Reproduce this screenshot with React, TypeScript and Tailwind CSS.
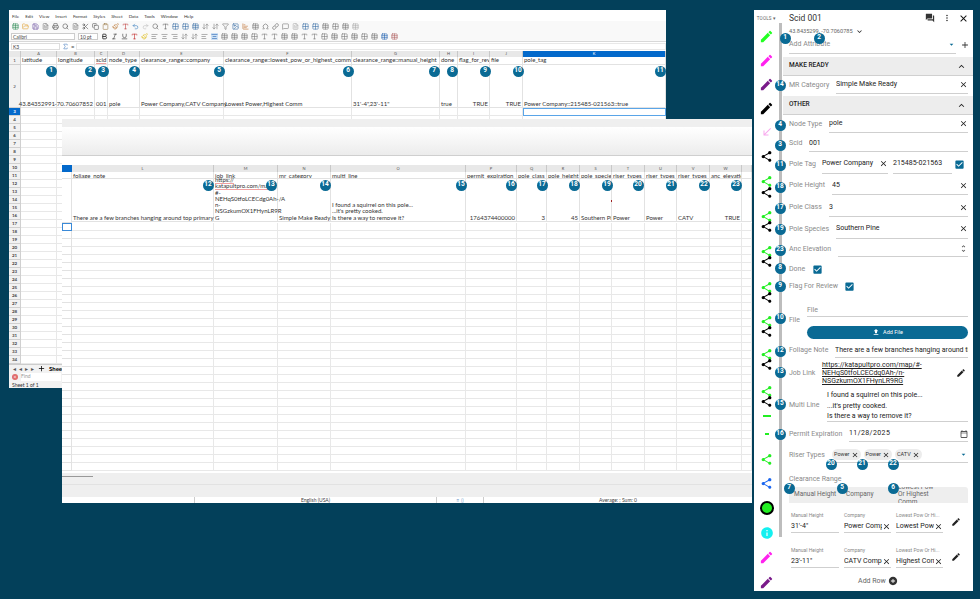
import {
  MdAdd, MdAddCircle, MdArrowDropDown, MdCallReceived, MdCheckBox, MdClose, MdEdit, MdExpandLess, MdExpandMore,
  MdFileUpload, MdForum, MdInfo, MdMoreVert, MdOutlineCalendarToday, MdShare, MdUnfoldMore,
} from "react-icons/md"
import {
  AlignCenter, AlignLeft, AlignRight, ArrowDownUp, Bold, ChartBar, Clipboard, Copy, Filter, FolderOpen, Grid2x2, Image, Italic,
  Link, MessageSquare, Omega, Printer, Redo2, Save, Scissors, Search, Sigma, Table, Type, Underline, Undo2, FileText, Paintbrush,
} from "lucide-react"

const W1_COLS = ["A", "B", "C", "D", "E", "F", "G", "H", "I", "J", "K"]
const W2_COLS = ["L", "M", "N", "O", "P", "Q", "R", "S", "T", "U", "V", "W", ""]
const SPELL = ["scid", "https://", "katapultpro.com/map/"]

const W1_HEAD = ["latitude", "longitude", "scid", "node_type", "clearance_range::company", "clearance_range::lowest_pow_or_highest_comm", "clearance_range::manual_height", "done", "flag_for_review", "file", "pole_tag"]
const W1_DATA: [string, boolean][] = [
  ["43.84352991", true], ["-70.70607852", true], ["001", false], ["pole", false], ["Power Company,CATV Company", false],
  ["Lowest Power,Highest Comm", false], ["31'-4\",23'-11\"", false], ["true", false], ["TRUE", true], ["TRUE", true],
  ["Power Company::215485-021563::true", false],
]

const W2_HEAD = ["foliage_note", "job_link", "mr_category", "multi_line", "permit_expiration", "pole_class", "pole_height", "pole_species", "riser_types", "riser_types", "riser_types", "anc_elevation", ""]
const W2_DATA: [string, boolean][] = [
  ["There are a few branches hanging around top primary", false],
  ["https://\nkatapultpro.com/map/\n#-\nNEHqS0tfoLCECdg0Ah-/A\nn-\nNSGzkumOX1FHynLR9R\nG", false],
  ["Simple Make Ready", false],
  ["I found a squirrel on this pole...\n...it's pretty cooked.\nIs there a way to remove it?", false],
  ["1764374400000", true], ["3", true], ["45", true], ["Southern Pine", false], ["Power", false], ["Power", false], ["CATV", false], ["TRUE", true], ["", false],
]

const PAGE_BADGES = [
  { n: 1, x: 51, y: 71 }, { n: 2, x: 90, y: 71 }, { n: 3, x: 103, y: 71 }, { n: 4, x: 134, y: 71 }, { n: 5, x: 219, y: 71 },
  { n: 6, x: 348, y: 71 }, { n: 7, x: 434, y: 71 }, { n: 8, x: 452, y: 71 }, { n: 9, x: 485, y: 71 }, { n: 10, x: 518, y: 71 }, { n: 11, x: 660, y: 71 },
  { n: 12, x: 208, y: 185 }, { n: 13, x: 271, y: 185 }, { n: 14, x: 325, y: 185 }, { n: 15, x: 461, y: 185 }, { n: 16, x: 511, y: 185 },
  { n: 17, x: 542, y: 185 }, { n: 18, x: 574, y: 185 }, { n: 19, x: 607, y: 185 }, { n: 20, x: 638, y: 185 }, { n: 21, x: 671, y: 185 },
  { n: 22, x: 704, y: 185 }, { n: 23, x: 736, y: 185 },
  { n: 1, x: 785, y: 38 }, { n: 2, x: 819, y: 38 }, { n: 14, x: 780, y: 85 }, { n: 4, x: 780, y: 125 }, { n: 3, x: 780, y: 145 },
  { n: 11, x: 780, y: 165 }, { n: 18, x: 780, y: 187 }, { n: 17, x: 780, y: 208 }, { n: 19, x: 780, y: 229 }, { n: 23, x: 780, y: 250 },
  { n: 8, x: 780, y: 268 }, { n: 9, x: 780, y: 286 }, { n: 10, x: 780, y: 318 }, { n: 12, x: 780, y: 351 }, { n: 13, x: 780, y: 372 },
  { n: 15, x: 780, y: 404 }, { n: 16, x: 780, y: 434 }, { n: 20, x: 831, y: 464 }, { n: 21, x: 862, y: 464 }, { n: 22, x: 893, y: 464 },
  { n: 7, x: 789, y: 488 }, { n: 5, x: 842, y: 488 }, { n: 6, x: 893, y: 488 },
]

// left rail: height of each slot decides where the next icon lands
const RAIL = [
  { kind: "pencil", color: "text-[#22ff22]", h: "h-[24px]" },
  { kind: "pencil", color: "text-[#ff22ee]", h: "h-[24px]" },
  { kind: "pencil", color: "text-[#7a1a8a]", h: "h-[24px]" },
  { kind: "pencil", color: "text-black", h: "h-[25px]" },
  { kind: "arrow", color: "text-[#f8a8ee]", h: "h-[24px]" },
  { kind: "share", color: "text-black", h: "h-[25px]" },
  { kind: "share", color: "text-[#22ee22]", h: "h-[11px]" },
  { kind: "share", color: "text-black", h: "h-[24px]" },
  { kind: "share", color: "text-[#22ee22]", h: "h-[10px]" },
  { kind: "share", color: "text-black", h: "h-[25px]" },
  { kind: "share", color: "text-[#22ee22]", h: "h-[10px]" },
  { kind: "share", color: "text-black", h: "h-[26px]" },
  { kind: "share", color: "text-[#22ee22]", h: "h-[10px]" },
  { kind: "share", color: "text-black", h: "h-[24px]" },
  { kind: "share", color: "text-[#22ee22]", h: "h-[10px]" },
  { kind: "share", color: "text-black", h: "h-[24px]" },
  { kind: "share", color: "text-[#22ee22]", h: "h-[10px]" },
  { kind: "share", color: "text-black", h: "h-[27px]" },
  { kind: "share", color: "text-[#22ee22]", h: "h-[10px]" },
  { kind: "share", color: "text-black", h: "h-[20px]" },
  { kind: "dash", color: "text-[#22ee22]", h: "h-[18px]" },
  { kind: "dot", color: "text-[#22ee22]", h: "h-[20px]" },
  { kind: "share", color: "text-[#22ee22]", h: "h-[24px]" },
  { kind: "share", color: "text-[#1a66f0]", h: "h-[24px]" },
  { kind: "circle", color: "text-[#22ee22]", h: "h-[25px]" },
  { kind: "info", color: "text-[#14f0f0]", h: "h-[24px]" },
  { kind: "pencil", color: "text-[#ff22ee]", h: "h-[25px]" },
  { kind: "pencil", color: "text-[#7a1a8a]", h: "h-[16px]" },
]

const TOOLBAR_ONE = [
  { I: Table, c: "text-[#2e8b57]" }, { I: FolderOpen, c: "text-[#e0a030]" }, { I: Save, c: "text-[#6a4fa0]" }, { I: FileText, c: "text-[#777]" },
  { I: Printer, c: "text-[#555]" }, { I: Search, c: "text-[#555]" }, { I: FileText, c: "text-[#777]" }, { I: Scissors, c: "text-[#555]" },
  { I: Copy, c: "text-[#555]" }, { I: Clipboard, c: "text-[#a08050]" }, { I: Paintbrush, c: "text-[#c08040]" }, { I: Type, c: "text-[#c04040]" },
  { I: Undo2, c: "text-[#3a7fc0]" }, { I: Redo2, c: "text-[#bbb]" }, { I: Search, c: "text-[#666]" }, { I: Type, c: "text-[#666]" },
  { I: Grid2x2, c: "text-[#3a6ea5]" }, { I: Grid2x2, c: "text-[#3a6ea5]" }, { I: Table, c: "text-[#3a6ea5]" }, { I: ArrowDownUp, c: "text-[#777]" },
  { I: ArrowDownUp, c: "text-[#777]" }, { I: Filter, c: "text-[#777]" }, { I: Image, c: "text-[#3a6ea5]" }, { I: ChartBar, c: "text-[#c07030]" },
  { I: Table, c: "text-[#777]" }, { I: Omega, c: "text-[#666]" }, { I: Link, c: "text-[#666]" }, { I: MessageSquare, c: "text-[#777]" },
  { I: FileText, c: "text-[#aaa]" }, { I: Grid2x2, c: "text-[#3a6ea5]" }, { I: Grid2x2, c: "text-[#3a6ea5]" }, { I: Table, c: "text-[#777]" },
  { I: Grid2x2, c: "text-[#777]" }, { I: Table, c: "text-[#777]" }, { I: Table, c: "text-[#aaa]" },
]

const TOOLBAR_TWO = [
  AlignLeft, AlignCenter, AlignRight, ArrowDownUp, ArrowDownUp, AlignLeft, AlignCenter, Table, Table, Table, Grid2x2, Type, Type, Table, Table, Type, Type,
  Grid2x2, Table, Grid2x2, Table, Grid2x2, Table,
]

function Badge({ n, x, y }: { n: number; x: number; y: number }) {
  return (
    <span
      className="absolute z-30 w-[11px] h-[11px] -ml-[5.5px] -mt-[5.5px] rounded-full bg-[#0a6a94] text-white text-[6.5px] font-bold flex items-center justify-center font-['Roboto',sans-serif]"
      style={{ left: x, top: y }}
    >
      {n}
    </span>
  )
}

function Menu() {
  return (
    <div className="h-[11px] pt-[2px] flex items-center gap-[6px] pl-[3px] text-[4.6px] text-[#333]">
      {["File", "Edit", "View", "Insert", "Format", "Styles", "Sheet", "Data", "Tools", "Window", "Help"].map((m) => (
        <span key={m}>{m}</span>
      ))}
    </div>
  )
}

function Cell({ text, right, tall, line }: { text: string; right?: boolean; tall?: boolean; line?: boolean }) {
  return (
    <div
      className={`border-r border-b border-[#e2e2e2] px-px min-w-0 whitespace-nowrap text-[6px] leading-[6.3px] text-[#333] flex flex-col ${
        tall ? "h-[43px] justify-end" : "h-[8px] overflow-hidden justify-center"
      } ${right ? "items-end" : "items-start"} ${line ? "overflow-hidden" : ""}`}
    >
      {text.split("\n").map((t, i) => (
        <span key={i} className={SPELL.includes(t) ? "underline decoration-[#f0a0a0]" : ""}>
          {t}
        </span>
      ))}
    </div>
  )
}

function HeadCell({ label, active }: { label: string; active?: boolean }) {
  return (
    <div
      className={`h-[6px] border-r border-[#c8c8c8] text-[4px] leading-[6px] text-center ${
        active ? "bg-[#0369cb] text-white" : "bg-[#e8e8e8] text-[#555]"
      }`}
    >
      {label}
    </div>
  )
}

function SheetOne() {
  const rows = Array.from({ length: 32 }, (_, i) => i + 3)
  return (
    <div className="grid grid-cols-[12px_36px_38px_13px_32px_84px_128px_88px_18px_32px_33px_143px] content-start">
      <HeadCell label="" />
      {W1_COLS.map((c) => (
        <HeadCell key={c} label={c} active={c === "K"} />
      ))}
      <div className="h-[8px] bg-[#f2f2f2] border-r border-b border-[#d0d0d0] text-[4.5px] leading-[8px] text-center text-[#444]">1</div>
      {W1_HEAD.map((t) => (
        <Cell key={t} text={t} line />
      ))}
      <div className="h-[43px] bg-[#f2f2f2] border-r border-b border-[#d0d0d0] text-[4.5px] leading-[43px] text-center text-[#444]">2</div>
      {W1_DATA.map(([t, r]) => (
        <Cell key={t} text={t} right={r} tall />
      ))}
      {rows.map((r) => (
        <div key={r} className="contents">
          <div
            className={`h-[8px] border-r border-b border-[#d0d0d0] text-[4.5px] leading-[8px] text-center font-bold ${
              r === 3 ? "bg-[#0369cb] text-white" : "bg-[#f2f2f2] text-[#444]"
            }`}
          >
            {r}
          </div>
          {W1_COLS.map((c) => (
            <div
              key={c}
              className={`h-[8px] border-r border-b ${r === 3 && c === "K" ? "border-[#5aa5e8] border-l border-t" : "border-[#e8e8e8]"}`}
            />
          ))}
        </div>
      ))}
    </div>
  )
}

function SheetTwo() {
  const rows = Array.from({ length: 31 }, (_, i) => i + 3)
  return (
    <div className="grid grid-cols-[10px_142px_64px_53px_135px_51px_30px_33px_32px_33px_32px_33px_32px_10px] content-start">
      <div className="h-[7px] bg-[#0369cb]" />
      {W2_COLS.map((c, i) => (
        <div key={i} className="h-[7px] bg-[#e8e8e8] border-r border-[#c8c8c8] text-[4px] leading-[7px] text-center text-[#555]">
          {c}
        </div>
      ))}
      <div className="h-[7px] border-r border-b border-[#e2e2e2]" />
      {W2_HEAD.map((t, i) => (
        <div key={i} className="h-[7px] border-r border-b border-[#e2e2e2] px-px overflow-hidden whitespace-nowrap text-[6px] leading-[7px] text-[#333]">
          {t}
        </div>
      ))}
      <div className="h-[44px] border-r border-b border-[#e2e2e2]" />
      {W2_DATA.map(([t, r], i) => (
        <Cell key={i} text={t} right={r} tall line={i === 7} />
      ))}
      {rows.map((r) => (
        <div key={r} className="contents">
          <div className={`h-[8px] border-r border-b ${r === 3 ? "border-[#3a8ad8] border-l border-t" : "border-[#e2e2e2]"}`} />
          {W2_COLS.map((c, i) => (
            <div key={i} className="h-[8px] border-r border-b border-[#e8e8e8]" />
          ))}
        </div>
      ))}
    </div>
  )
}

function WindowOne() {
  return (
    <div className="absolute left-[9px] top-[10px] w-[657px] h-[378px] bg-white flex flex-col overflow-hidden font-['Lato',sans-serif]">
      <Menu />
      <div className="h-[11px] bg-[#f9f9f9] flex items-center gap-[3px] pl-[3px]">
        {TOOLBAR_ONE.map(({ I, c }, i) => (
          <I key={i} size={7} className={`${c} shrink-0`} strokeWidth={2} />
        ))}
      </div>
      <div className="h-[10px] bg-[#f9f9f9] flex items-center gap-[3px] pl-[2px] border-b border-[#d8d8d8]">
        <div className="w-[64px] h-[7px] bg-white border border-[#ccc] text-[5px] leading-[6px] pl-px text-[#444] shrink-0">Calibri</div>
        <div className="w-[20px] h-[7px] bg-white border border-[#ccc] text-[5px] leading-[6px] pl-px text-[#444] shrink-0">10 pt</div>
        <Bold size={7} className="text-[#333] shrink-0" strokeWidth={3} />
        <Italic size={7} className="text-[#333] shrink-0" />
        <Underline size={7} className="text-[#333] shrink-0" />
        <Type size={7} className="text-[#c02020] shrink-0" />
        <Paintbrush size={7} className="text-[#e0c020] shrink-0" />
        {TOOLBAR_TWO.map((I, i) => (
          <I key={i} size={7} className={`shrink-0 ${i === 6 ? "text-[#2060b0] bg-[#cfe2f5]" : "text-[#777]"}`} />
        ))}
        <Table size={7} className="text-[#2060b0] shrink-0" />
        <Table size={7} className="text-[#b06060] shrink-0" />
      </div>
      <div className="h-[9px] flex items-center gap-[2px] pl-[2px] text-[5px] text-[#444]">
        <div className="w-[49px] h-[7px] bg-white border border-[#ddd] leading-[6px] pl-px shrink-0">K3</div>
        <Sigma size={7} className="text-[#4a80c0] shrink-0" />
        <span className="text-[6px]">=</span>
        <div className="flex-1 h-[7px] bg-white border border-[#e8e8e8]" />
      </div>
      <div className="flex-1 min-h-0 overflow-hidden">
        <SheetOne />
      </div>
      <div className="h-[8px] bg-[#f2f2f2] flex items-center gap-[3px] pl-[4px] text-[6px] text-[#555] border-t border-[#ccc]">
        <span>◂</span><span>◂</span><span>▸</span><span>▸</span>
        <MdAdd size={9} className="text-black" />
        <span className="font-bold text-black underline">Sheet</span>
      </div>
      <div className="h-[10px] bg-[#f2f2f2] flex items-center gap-[3px] pl-[3px] text-[5px] text-[#999]">
        <span className="w-[6px] h-[6px] rounded-full bg-[#e06a6a] text-white text-[5px] leading-[6px] text-center">×</span>
        <span className="w-[40px] bg-white">Find</span>
      </div>
      <div className="h-[6px] bg-[#f2f2f2] pl-[3px] text-[5px] leading-[6px] text-[#333]">Sheet 1 of 1</div>
    </div>
  )
}

function WindowTwo() {
  return (
    <div className="absolute z-10 left-[62px] top-[119px] w-[690px] h-[384px] bg-white flex flex-col overflow-hidden font-['Lato',sans-serif]">
      <div className="h-[8px] bg-[#efefef]" />
      <div className="h-[29px] bg-linear-to-b from-white to-[#ececec] border-b border-[#cfcfcf]" />
      <div className="h-[9px] bg-white" />
      <div className="h-[308px] overflow-hidden">
        <SheetTwo />
      </div>
      <div className="relative h-[24px] bg-[#efefef]">
        <div className="absolute left-0 top-[3px] w-[31px] h-px bg-[#999]" />
        <div className="absolute left-0 right-0 top-[11px] h-px bg-[#e2e2e2]" />
      </div>
      <div className="flex-1 flex items-center text-[5px] text-[#444]">
        <div className="w-[133px] h-full border-r border-[#ccc]" />
        <div className="w-[242px] h-full border-r border-[#ccc] text-center leading-[6px]">English (USA)</div>
        <div className="w-[47px] h-full border-r border-[#ccc] text-center leading-[6px] text-[#4a80c0]">≡ ▯</div>
        <div className="flex-1 text-center leading-[6px]">Average: ; Sum: 0</div>
      </div>
      <span className="absolute left-[549px] top-[81px] w-px h-[2px] bg-[#a02020]" />
    </div>
  )
}

function RailIcon({ kind, color }: { kind: string; color: string }) {
  if (kind === "pencil") return <MdEdit size={15} className={color} />
  if (kind === "share") return <MdShare size={13} className={color} />
  if (kind === "arrow") return <MdCallReceived size={12} className={color} />
  if (kind === "info") return <MdInfo size={14} className={color} />
  if (kind === "circle") return <span className="w-[14px] h-[14px] rounded-full bg-[#22ee22] border-2 border-black" />
  if (kind === "dash") return <span className="w-[8px] h-[2px] bg-[#22ee22]" />
  return <span className="w-[4px] h-[2px] bg-[#22ee22]" />
}

function Rail() {
  return (
    <div className="w-[25px] shrink-0 flex flex-col items-center">
      <div className="h-[19px] w-full flex items-center justify-center text-[4.5px] text-[#666] tracking-[0.2px]">TOOLS ▾</div>
      {RAIL.map((r, i) => (
        <div key={i} className={`${r.h} flex items-start justify-center overflow-visible`}>
          <RailIcon kind={r.kind} color={r.color} />
        </div>
      ))}
    </div>
  )
}

function XBtn({ size = 9 }: { size?: number }) {
  return <MdClose size={size} className="text-[#222] shrink-0" />
}

function Field({ label, value, height, labelW, close = true }: { label: string; value: string; height: string; labelW: string; close?: boolean }) {
  return (
    <div className={`${height} flex items-center pl-[6px] pr-[5px]`}>
      <span className={`${labelW} shrink-0 text-[7px] text-[#8a8a8a] whitespace-nowrap`}>{label}</span>
      <div className="flex-1 min-w-0 self-stretch flex items-center border-b border-[#cfcfcf] text-[7px] text-[#222]">
        <span className="flex-1 whitespace-nowrap overflow-hidden">{value}</span>
        {close && <XBtn />}
      </div>
    </div>
  )
}

function Band({ label, top }: { label: string; top: string }) {
  return (
    <div className={`${top} h-[19px] bg-[#ededed] border-b border-[#d0d0d0] flex items-center justify-between pl-[6px] pr-[6px]`}>
      <span className="text-[6.5px] font-medium text-[#222]">{label}</span>
      <MdExpandLess size={11} className="text-[#222]" />
    </div>
  )
}

function Chip({ label }: { label: string }) {
  return (
    <span className="h-[11px] px-[2px] rounded-full bg-[#ececec] flex items-center gap-[1px] text-[5.5px] text-[#333]">
      {label}
      <MdClose size={8} className="text-[#222]" />
    </span>
  )
}

function ClearanceRow({ height, company, lowest, top }: { height: string; company: string; lowest: string; top: string }) {
  const cols = [
    { label: "Manual Height", value: height, w: "w-[48px]", x: false },
    { label: "Company", value: company, w: "w-[47px]", x: true },
    { label: "Lowest Pow Or Hi...", value: lowest, w: "w-[47px]", x: true },
  ]
  return (
    <div className={`${top} flex items-end gap-[5px] pl-[8px]`}>
      {cols.map((c) => (
        <div key={c.label} className={`${c.w} h-[22px] border-b border-[#cfcfcf] flex flex-col justify-between pb-[1px]`}>
          <span className="text-[5px] text-[#888] whitespace-nowrap leading-[8px]">{c.label}</span>
          <span className="flex items-center text-[7px] text-[#222] leading-[10px]">
            <span className="flex-1 overflow-hidden whitespace-nowrap">{c.value}</span>
            {c.x && <XBtn />}
          </span>
        </div>
      ))}
      <div className="self-center ml-[3px]">
        <MdEdit size={10} className="text-[#222]" />
      </div>
    </div>
  )
}

function Panel() {
  return (
    <div className="absolute left-[754px] top-[10px] w-[219px] h-[581px] bg-white flex overflow-hidden font-['Roboto',sans-serif]">
      <Rail />
      <div className="w-[3px] shrink-0 mt-[13px] h-[514px] bg-[#bdbdbd]" />
      <div className="w-[1px] shrink-0" />
      <div className="flex-1 min-w-0 flex flex-col">
        <div className="h-[16px] flex items-center pl-[6px] pr-[4px] text-[8.5px] text-[#333]">
          <span className="flex-1">Scid 001</span>
          <MdForum size={10} className="text-[#333] mr-[7px]" />
          <MdMoreVert size={10} className="text-[#333] mr-[6px]" />
          <MdClose size={11} className="text-[#111]" />
        </div>
        <div className="h-[10px] flex items-center pl-[6px] text-[5.6px] text-[#666]">
          43.8435299, -70.7060785
          <MdExpandMore size={9} className="ml-[2px] text-[#222]" />
        </div>
        <div className="h-[18px] flex items-center pl-[6px] pr-[3px] gap-[4px]">
          <div className="flex-1 self-stretch flex items-center justify-between border-b border-[#cfcfcf] text-[7px] text-[#8a8a8a]">
            Add Attribute
            <MdArrowDropDown size={9} className="text-[#0a6a94]" />
          </div>
          <MdAdd size={10} className="text-[#333]" />
        </div>
        <Band label="MAKE READY" top="mt-[3px]" />
        <Field label="MR Category" value="Simple Make Ready" height="h-[18px]" labelW="w-[47px]" />
        <Band label="OTHER" top="mt-[2px]" />
        <Field label="Node Type" value="pole" height="h-[18px]" labelW="w-[40px]" />
        <Field label="Scid" value="001" height="h-[17px] mt-[2px]" labelW="w-[20px]" close={false} />
        <div className="h-[20px] mt-[2px] flex items-center pl-[6px] pr-[8px]">
          <span className="w-[33px] shrink-0 text-[7px] text-[#8a8a8a] whitespace-nowrap">Pole Tag</span>
          <div className="w-[66px] self-stretch border-b border-[#cfcfcf] flex items-center text-[7px] text-[#222]">
            <span className="flex-1 whitespace-nowrap">Power Company</span>
            <XBtn />
          </div>
          <div className="w-[59px] ml-[5px] self-stretch border-b border-[#cfcfcf] flex items-center text-[7px] text-[#222]">215485-021563</div>
          <MdCheckBox size={11} className="ml-[2px] text-[#0a6a94]" />
        </div>
        <Field label="Pole Height" value="45" height="h-[19px] mt-[2px]" labelW="w-[43px]" />
        <Field label="Pole Class" value="3" height="h-[19px] mt-[3px]" labelW="w-[40px]" />
        <Field label="Pole Species" value="Southern Pine" height="h-[20px] mt-[2px]" labelW="w-[47px]" />
        <div className="h-[16px] mt-[2px] flex items-center pl-[6px] pr-[5px]">
          <span className="w-[49px] shrink-0 text-[7px] text-[#8a8a8a] whitespace-nowrap">Anc Elevation</span>
          <div className="flex-1 self-stretch border-b border-[#cfcfcf] flex items-center justify-end">
            <MdUnfoldMore size={9} className="text-[#555]" />
          </div>
        </div>
        <div className="h-[16px] mt-[4px] flex items-center pl-[6px] text-[7px] text-[#8a8a8a]">
          <span className="w-[23px]">Done</span>
          <MdCheckBox size={11} className="text-[#0a6a94]" />
        </div>
        <div className="h-[16px] mt-px flex items-center pl-[6px] text-[7px] text-[#8a8a8a]">
          <span className="w-[55px] whitespace-nowrap">Flag For Review</span>
          <MdCheckBox size={11} className="text-[#0a6a94]" />
        </div>
        <div className="h-[37px] mt-[8px] flex items-center pl-[6px] pr-[5px]">
          <span className="w-[18px] shrink-0 text-[7px] text-[#8a8a8a] -mt-px">File</span>
          <div className="flex-1 flex flex-col">
            <div className="h-[14px] border-b border-[#cfcfcf] text-[7px] text-[#8a8a8a] leading-[14px]">File</div>
            <div className="mt-[9px] h-[13px] rounded-full bg-[#0a6a94] flex items-center justify-center gap-[3px] text-[5.5px] text-white">
              <MdFileUpload size={8} />
              Add File
            </div>
          </div>
        </div>
        <Field label="Foliage Note" value="There are a few branches hanging around the top primary" height="h-[15px] mt-[4px]" labelW="w-[46px]" close={false} />
        <div className="h-[24px] mt-[3px] flex items-center pl-[6px] pr-[7px]">
          <span className="w-[33px] shrink-0 text-[7px] text-[#8a8a8a]">Job Link</span>
          <div className="flex-1 text-[7px] leading-[8px] text-[#222] underline">
            https://katapultpro.com/map/#-
            <br />
            NEHqS0tfoLCECdg0Ah-/n-
            <br />
            NSGzkumOX1FHynLR9RG
          </div>
          <MdEdit size={10} className="text-[#222]" />
        </div>
        <div className="h-[33px] mt-[4px] flex items-center pl-[6px] pr-[5px]">
          <span className="w-[38px] shrink-0 text-[7px] text-[#8a8a8a]">Multi Line</span>
          <div className="flex-1 self-stretch border-b border-[#cfcfcf] text-[7px] leading-[10.5px] text-[#222] pt-px">
            I found a squirrel on this pole...
            <br />
            ...it's pretty cooked.
            <br />
            Is there a way to remove it?
          </div>
        </div>
        <div className="h-[16px] mt-[4px] flex items-center pl-[6px] pr-[5px]">
          <span className="w-[60px] shrink-0 text-[7px] text-[#8a8a8a] whitespace-nowrap">Permit Expiration</span>
          <div className="flex-1 self-stretch border-b border-[#cfcfcf] flex items-center justify-between text-[7px] text-[#222] tracking-[0.4px]">
            11/28/2025
            <MdOutlineCalendarToday size={8} className="text-[#222]" />
          </div>
        </div>
        <div className="h-[16px] mt-[5px] flex items-center pl-[6px] pr-[5px]">
          <span className="w-[43px] shrink-0 text-[7px] text-[#8a8a8a] whitespace-nowrap">Riser Types</span>
          <div className="flex-1 self-stretch border-b border-[#cfcfcf] flex items-center gap-[3px]">
            <Chip label="Power" />
            <Chip label="Power" />
            <Chip label="CATV" />
            <MdArrowDropDown size={9} className="ml-auto text-[#0a6a94]" />
          </div>
        </div>
        <div className="h-[16px] mt-[8px] flex items-center pl-[6px] text-[7px] text-[#8a8a8a]">Clearance Range</div>
        <div className="h-[16px] ml-[6px] mr-[5px] bg-[#eeeeee] rounded-t-[3px] flex text-[6.5px] text-[#666] overflow-hidden">
          <div className="w-[52px] pl-[5px] self-center whitespace-nowrap">Manual Height</div>
          <div className="w-[52px] pl-[5px] self-center">Company</div>
          <div className="flex-1 pl-[5px] self-center leading-[7.5px]">
            Lowest Pow
            <br />
            Or Highest
            <br />
            Comm
          </div>
        </div>
        <ClearanceRow height={"31'-4\""} company="Power Company" lowest="Lowest Power" top="mt-[8px]" />
        <ClearanceRow height={"23'-11\""} company="CATV Company" lowest="Highest Comm" top="mt-[13px]" />
        <div className="h-[14px] mt-[6px] flex items-center justify-center gap-[2px] text-[7px] text-[#666]">
          Add Row
          <MdAddCircle size={10} className="text-[#333]" />
        </div>
      </div>
    </div>
  )
}

export default function App() {
  return (
    <div className="relative w-[980px] h-[599px] bg-[#03405a] overflow-hidden">
      <WindowOne />
      <WindowTwo />
      <Panel />
      {PAGE_BADGES.map((b, i) => (
        <Badge key={i} {...b} />
      ))}
    </div>
  )
}
